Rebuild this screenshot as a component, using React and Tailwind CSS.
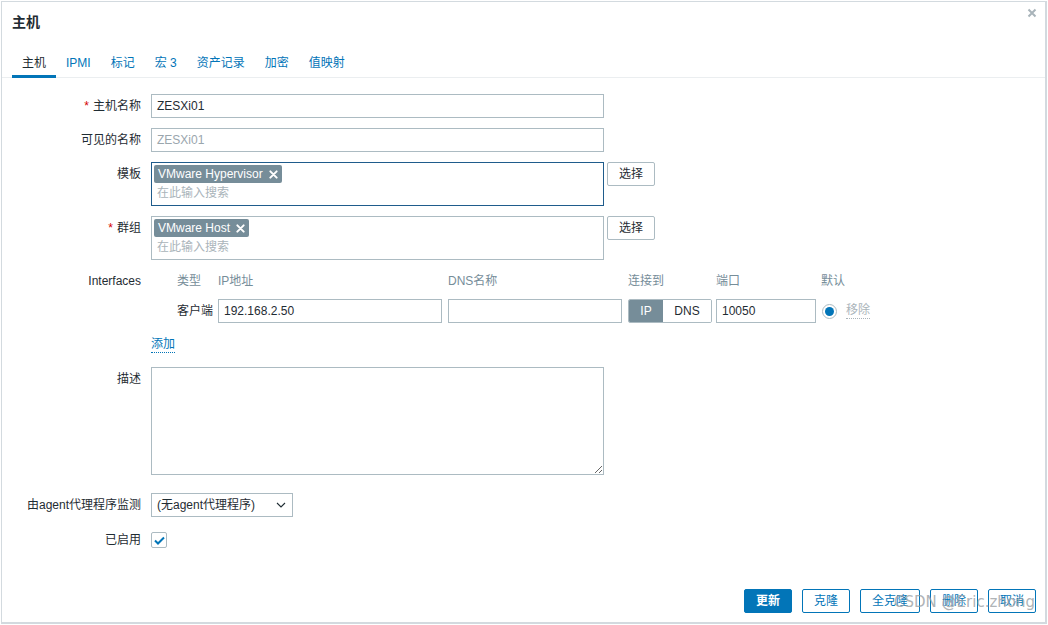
import { useState } from 'react'

const TABS = ['主机', 'IPMI', '标记', '宏 3', '资产记录', '加密', '值映射']
const FONT = "font-['Liberation_Sans','Noto_Sans_CJK_SC',sans-serif]"

function Label({ children, required }) {
  return (
    <div className="w-[139px] shrink-0 text-right pt-[5px] leading-[14px] text-[12px] text-[#1f2c33]">
      {required && <span className="text-[#d40000] mr-[4px]">*</span>}
      {children}
    </div>
  )
}

function Row({ label, required, children, className = '' }) {
  return (
    <div className={`flex items-start gap-[10px] ${className}`}>
      <Label required={required}>{label}</Label>
      {children}
    </div>
  )
}

function TextInput({ value, muted, w = 'w-[453px]' }) {
  return (
    <div className={`${w} h-6 border border-[#acbbc2] bg-white px-[5px] flex items-center text-[12px] ${muted ? 'text-[#9aa6ad]' : 'text-[#1f2c33]'}`}>
      {value}
    </div>
  )
}

function Tag({ text }) {
  return (
    <span className="flex items-center h-[18px] px-[4px] bg-[#768d99] text-white text-[12px] rounded-[2px] gap-[6px]">
      {text}
      <svg width="9" height="9" viewBox="0 0 10 10">
        <path d="M1.5 1.5 L8.5 8.5 M8.5 1.5 L1.5 8.5" stroke="white" strokeWidth="2.2" strokeLinecap="round" />
      </svg>
    </span>
  )
}

function MultiSelect({ tag, focused }) {
  return (
    <div className="flex gap-[3px]">
      <div className={`w-[453px] h-[44px] border bg-white px-[2px] pt-[2px] flex flex-col items-start ${focused ? 'border-[#1f5c8c]' : 'border-[#acbbc2]'}`}>
        <Tag text={tag} />
        <div className="pl-[3px] pt-[2px] text-[12px] leading-[16px] text-[#aab4ba]">在此输入搜索</div>
      </div>
      <button className="w-[48px] h-6 border border-[#acbbc2] bg-white rounded-[2px] text-[12px] text-[#1f2c33]">选择</button>
    </div>
  )
}

function FooterButton({ children, primary, w = 'w-[48px]' }) {
  return (
    <button
      className={`${w} h-6 rounded-[2px] border border-[#0275b8] text-[12px] ${primary ? 'bg-[#0275b8] text-white font-bold' : 'bg-white text-[#0275b8]'}`}
    >
      {children}
    </button>
  )
}

export default function App() {
  const [active] = useState(0)

  return (
    <div className={`w-[1048px] h-[625px] bg-white p-px ${FONT}`}>
      <div className="relative w-[1046px] h-[623px] border border-[#d3dadf] border-r-2 border-b-2 bg-white flex flex-col">
        {/* header */}
        <div className="h-[40px] flex items-center pl-[10px] text-[14px] font-bold text-[#1f2c33]">主机</div>
        <button className="absolute right-[8px] top-[6px] text-[#a9b4ba]">
          <svg width="10" height="10" viewBox="0 0 10 10">
            <path d="M1.5 1.5 L8.5 8.5 M8.5 1.5 L1.5 8.5" stroke="currentColor" strokeWidth="2" />
          </svg>
        </button>

        {/* tabs */}
        <div className="flex px-[10px] border-b border-[#ebeef0]">
          {TABS.map((t, i) => (
            <div
              key={t}
              className={`px-[10px] pt-[14px] pb-[4px] leading-[15px] text-[12px] -mb-px border-b-[3px] ${i === active ? 'text-[#1f2c33] border-[#0275b8]' : 'text-[#0275b8] border-transparent'}`}
            >
              {t}
            </div>
          ))}
        </div>

        {/* form */}
        <div className="flex flex-col pt-[16px]">
          <Row label="主机名称" required>
            <TextInput value="ZESXi01" />
          </Row>
          <Row label="可见的名称" className="mt-[10px]">
            <TextInput value="ZESXi01" muted />
          </Row>
          <Row label="模板" className="mt-[10px]">
            <MultiSelect tag="VMware Hypervisor" focused />
          </Row>
          <Row label="群组" required className="mt-[10px]">
            <MultiSelect tag="VMware Host" />
          </Row>

          {/* interfaces */}
          <div className="flex gap-[10px] mt-[10px]">
            <div className="w-[139px] shrink-0 text-right h-[22px] leading-[22px] text-[12px] text-[#1f2c33]">Interfaces</div>
            <div className="pl-[26px] flex flex-col">
              <div className="flex h-[22px] items-center text-[12px] text-[#768d99]">
                <div className="w-[41px]">类型</div>
                <div className="w-[230px]">IP地址</div>
                <div className="w-[180px]">DNS名称</div>
                <div className="w-[88px]">连接到</div>
                <div className="w-[105px]">端口</div>
                <div>默认</div>
              </div>
              <div className="flex items-center mt-[7px] text-[12px]">
                <div className="w-[41px] text-[#1f2c33]">客户端</div>
                <TextInput value="192.168.2.50" w="w-[224px]" />
                <div className="ml-[6px]"><TextInput value="" w="w-[174px]" /></div>
                <div className="ml-[6px] flex h-6 w-[84px] border border-[#acbbc2] rounded-[2px] overflow-hidden">
                  <div className="w-[34px] bg-[#768d99] text-white flex items-center justify-center">IP</div>
                  <div className="flex-1 bg-white text-[#1f2c33] flex items-center justify-center">DNS</div>
                </div>
                <div className="ml-[4px]"><TextInput value="10050" w="w-[100px]" /></div>
                <div className="ml-[6px] w-[15px] h-[15px] rounded-full border border-[#acbbc2] flex items-center justify-center">
                  <div className="w-[9px] h-[9px] rounded-full bg-[#0275b8]" />
                </div>
                <span className="ml-[9px] text-[#aab4ba] border-b border-dotted border-[#aab4ba] leading-[15px]">移除</span>
              </div>
            </div>
          </div>

          <div className="flex gap-[10px] mt-[12px] h-[20px] items-center">
            <div className="w-[139px] shrink-0" />
            <span className="text-[12px] text-[#0275b8] border-b border-dotted border-[#0275b8] leading-[15px]">添加</span>
          </div>

          <Row label="描述" className="mt-[12px]">
            <textarea className="w-[453px] h-[108px] border border-[#acbbc2] bg-white outline-none" />
          </Row>

          <Row label="由agent代理程序监测" className="mt-[18px]">
            <div className="relative w-[142px] h-6 border border-[#acbbc2] bg-white flex items-center pl-[5px] text-[12px] text-[#1f2c33]">
              (无agent代理程序)
              <svg className="absolute right-[6px] top-[8px]" width="10" height="6" viewBox="0 0 10 6">
                <path d="M1 1 L5 5 L9 1" stroke="#1f2c33" strokeWidth="1.1" fill="none" />
              </svg>
            </div>
          </Row>

          <div className="flex gap-[10px] mt-[14px] items-center">
            <div className="w-[139px] shrink-0 text-right text-[12px] text-[#1f2c33]">已启用</div>
            <div className="w-[16px] h-[16px] border border-[#acbbc2] rounded-[2px] bg-white flex items-center justify-center">
              <svg width="11" height="9" viewBox="0 0 11 9">
                <path d="M1 4.5 L4 7.5 L10 1.5" stroke="#0275b8" strokeWidth="2" fill="none" />
              </svg>
            </div>
          </div>
        </div>

        <div className="flex-1" />

        {/* footer */}
        <div className="flex justify-end gap-[10px] pr-[9px] pb-[9px]">
          <FooterButton primary>更新</FooterButton>
          <FooterButton>克隆</FooterButton>
          <FooterButton w="w-[60px]">全克隆</FooterButton>
          <FooterButton>删除</FooterButton>
          <FooterButton>取消</FooterButton>
        </div>

        <div className="absolute right-[10px] bottom-[9px] text-[15px] text-[#9aa0a4]/80 pointer-events-none font-['DejaVu_Sans',sans-serif]">
          CSDN @Eric.zhong
        </div>
      </div>
    </div>
  )
}
